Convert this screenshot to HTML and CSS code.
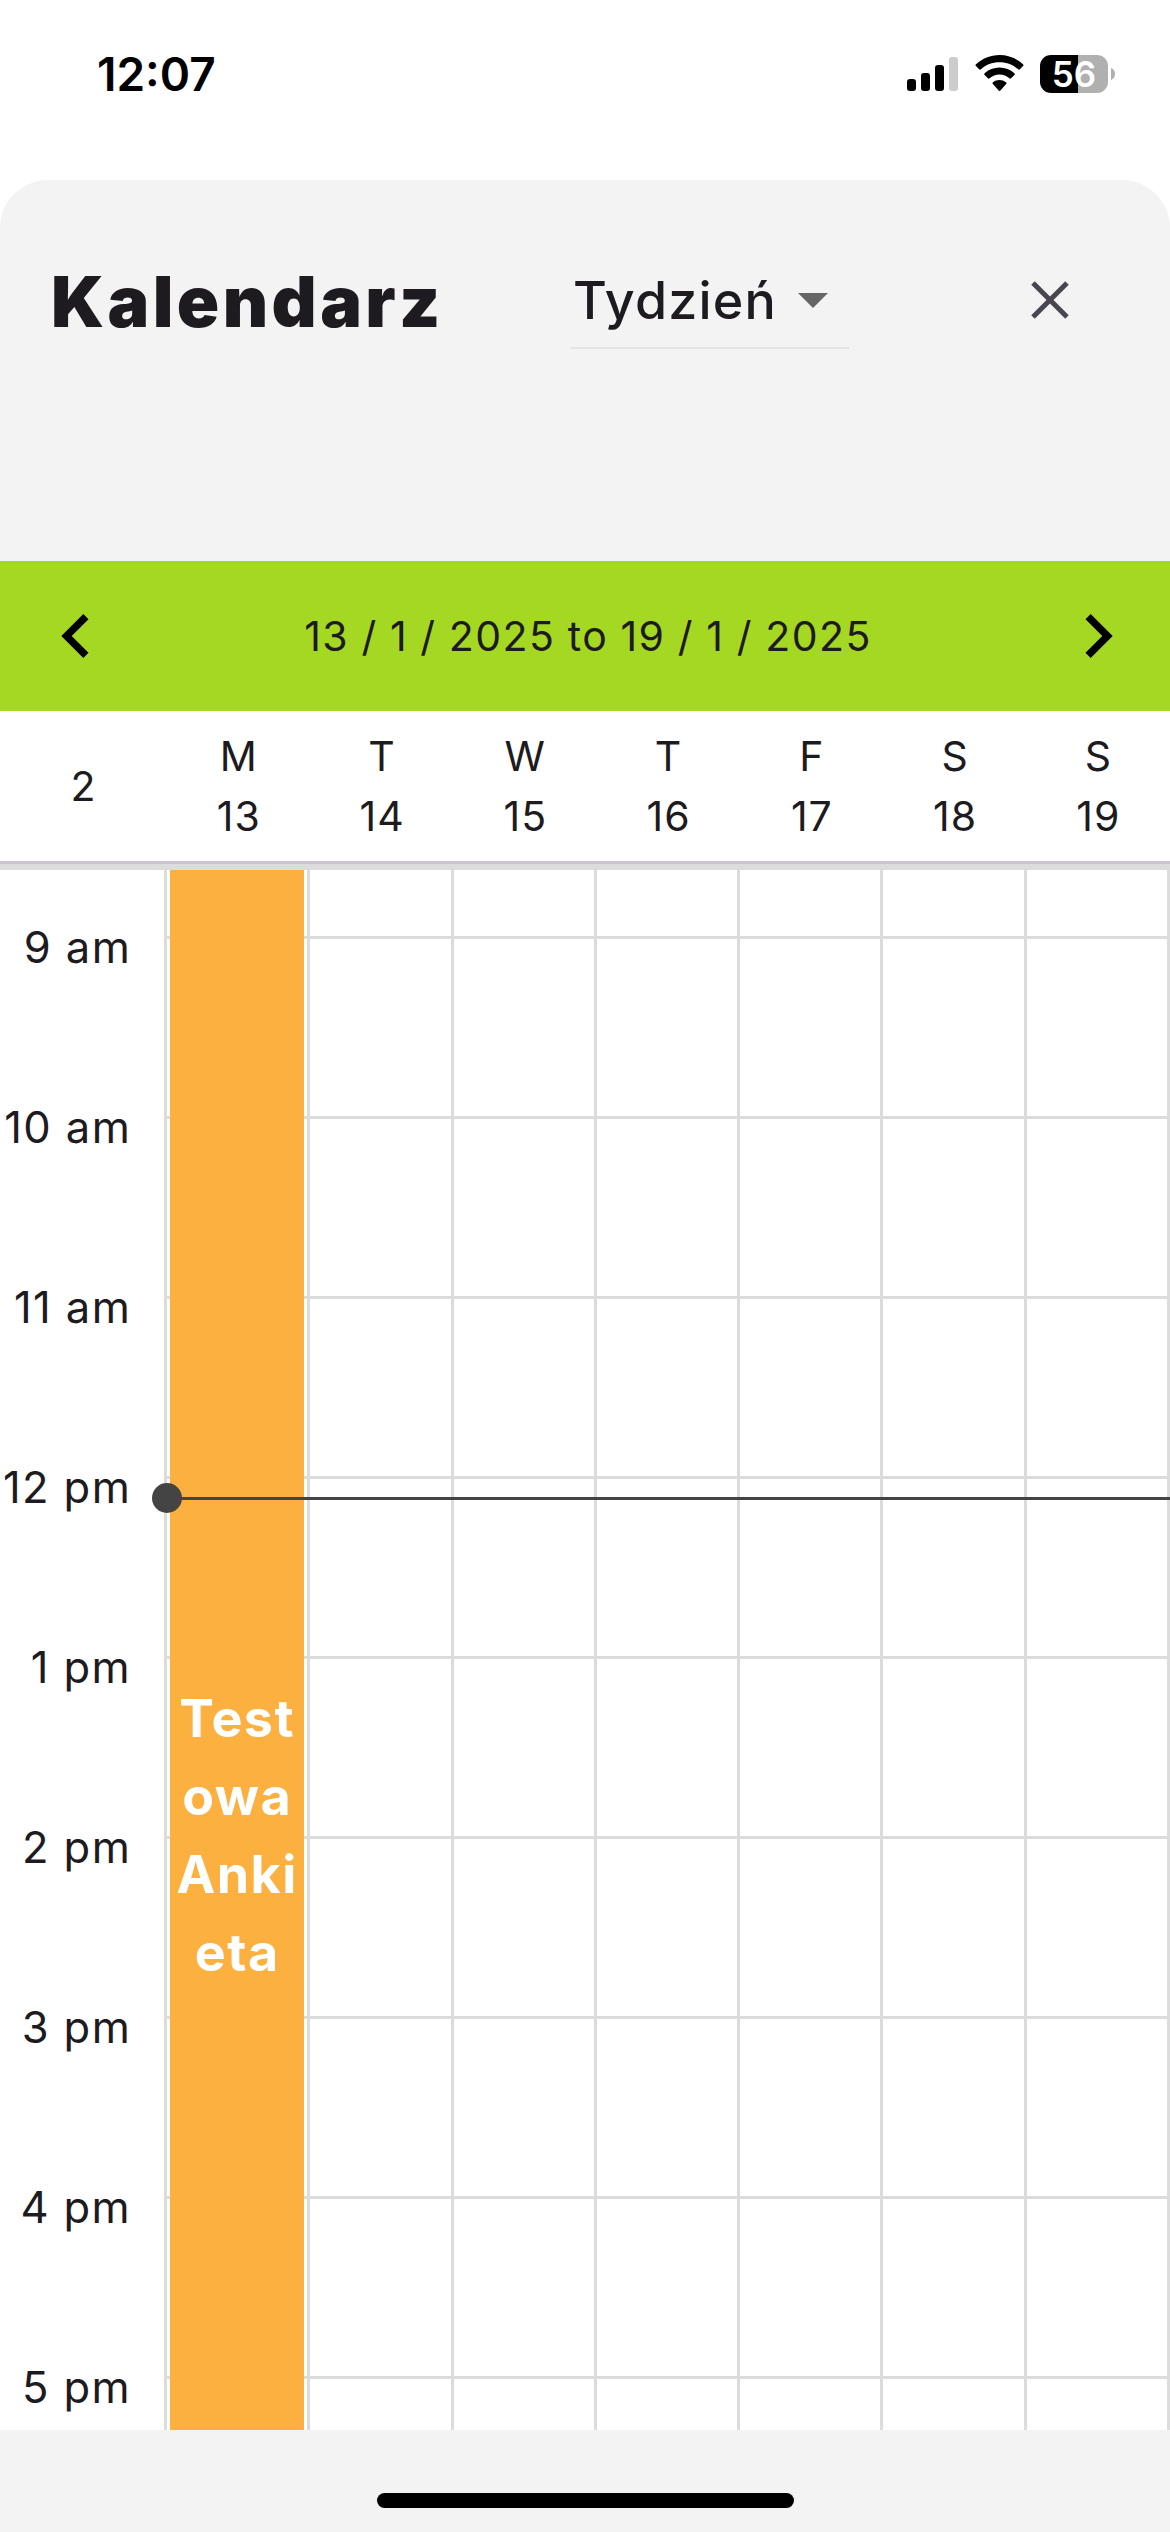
FILE: index.html
```html
<!DOCTYPE html>
<html lang="pl">
<head>
<meta charset="utf-8">
<title>Kalendarz</title>
<link rel="stylesheet" href="styles.css">
</head>
<body>
<header class="status">
  <div class="clock"><span>12:07</span></div>
  <div class="status-icons">
    <svg class="signal" width="51" height="34" viewBox="0 0 51 34">
      <rect x="0" y="22" width="9" height="12" rx="3"/>
      <rect x="14" y="16" width="9" height="18" rx="3"/>
      <rect x="28" y="8" width="9" height="26" rx="3"/>
      <rect x="42" y="0" width="9" height="34" rx="3" fill="#ccc"/>
    </svg>
    <svg class="wifi" width="49" height="36" viewBox="0 0 49 36">
      <path d="M24.500 0C15.500 0 7.200 3.500 1 9.300a1.200 1.200 0 0 0 0 1.800l3.100 3.200a1.300 1.300 0 0 0 1.800 0C10.800 9.800 17.300 7.200 24.500 7.200s13.700 2.600 18.600 7.100a1.300 1.300 0 0 0 1.800 0l3.100-3.200a1.200 1.200 0 0 0 0-1.800C41.800 3.500 33.500 0 24.500 0z"/>
      <path d="M24.500 12.500c-5.700 0-10.900 2.200-14.900 5.700a1.200 1.200 0 0 0 0 1.800l3.300 3.300a1.300 1.300 0 0 0 1.700 0c2.700-2.300 6.100-3.700 9.900-3.700s7.200 1.400 9.900 3.700a1.300 1.300 0 0 0 1.700 0l3.300-3.300a1.200 1.200 0 0 0 0-1.800c-4-3.500-9.200-5.700-14.900-5.700z"/>
      <path d="M24.500 25c-2.500 0-4.700.8-6.500 2.200a1.200 1.200 0 0 0-.1 1.800l5.700 6.500a1.200 1.200 0 0 0 1.800 0L31.100 29a1.200 1.200 0 0 0-.1-1.800A10.500 10.500 0 0 0 24.500 25z"/>
    </svg>
    <div class="battery"><span class="level">56</span><svg width="4" height="12" viewBox="0 0 4 12"><path d="M0 0C2.500 1 4 3.200 4 6S2.500 11 0 12z" fill="#b0b0b0"/></svg></div>
  </div>
</header>
<main class="sheet">
  <div class="toolbar">
    <h1 class="title">Kalendarz</h1>
    <div class="select"><span class="select-label">Tydzień</span><svg width="30" height="15" viewBox="0 0 30 15"><path d="M0 0h30L15 15z" fill="#666"/></svg></div>
    <svg class="close" width="38" height="38" viewBox="0 0 38 38"><path d="M2 2l34 34M36 2L2 36" stroke="#49454f" stroke-width="5"/></svg>
  </div>
  <nav class="range">
    <svg width="88" height="88" viewBox="0 0 24 24"><path d="M15.410 16.580L10.830 12l4.580-4.590L14 6l-6 6 6 6z"/></svg>
    <span class="range-label">13 / 1 / 2025 to 19 / 1 / 2025</span>
    <svg width="88" height="88" viewBox="0 0 24 24"><path d="M8.590 16.580L13.170 12 8.590 7.410 10 6l6 6-6 6z"/></svg>
  </nav>
  <div class="days">
    <div class="day">2</div>
    <div class="day">M<br>13</div>
    <div class="day">T<br>14</div>
    <div class="day">W<br>15</div>
    <div class="day">T<br>16</div>
    <div class="day">F<br>17</div>
    <div class="day">S<br>18</div>
    <div class="day">S<br>19</div>
  </div>
  <div class="grid">
    <div class="hours">
      <span>9 am</span><span>10 am</span><span>11 am</span><span>12 pm</span><span>1 pm</span><span>2 pm</span><span>3 pm</span><span>4 pm</span><span>5 pm</span>
    </div>
    <div class="col"><div class="event">Test<br>owa<br>Anki<br>eta</div></div>
    <div class="col"></div>
    <div class="col"></div>
    <div class="col"></div>
    <div class="col"></div>
    <div class="col"></div>
    <div class="col"></div>
    <div class="now"></div>
  </div>
</main>
<footer class="home"><div class="home-bar"></div></footer>
</body>
</html>
```
FILE: styles.css
```css
* { box-sizing: border-box; }
body {
  margin: 0;
  width: 1170px;
  height: 2532px;
  overflow: hidden;
  display: flex;
  flex-direction: column;
  background: #fff;
  color: #1d1b20;
  font-family: Inter, "Liberation Sans", sans-serif;
}
svg { display: block; flex: none; }
.status {
  height: 180px;
  padding: 55px 55px 0 97px;
  display: flex;
  justify-content: space-between;
  align-items: flex-start;
  color: #000;
}
.clock { height: 39px; line-height: 39px; font-size: 46px; font-weight: 600; }
.status-icons { display: flex; }
.signal { margin: 2px 17px 0 0; }
.wifi { margin-right: 16px; }
.battery { display: flex; align-items: center; gap: 3px; }
.level {
  width: 68px;
  height: 38px;
  border-radius: 11px;
  background: linear-gradient(90deg, #000 38px, #b0b0b0 38px);
  color: #fff;
  font-size: 35px;
  font-weight: 600;
  line-height: 38px;
  text-align: center;
}
.sheet {
  flex: 1;
  min-height: 0;
  display: flex;
  flex-direction: column;
  background: #f3f3f3;
  border-radius: 48px 48px 0 0;
}
.toolbar {
  height: 381px;
  padding: 71px 101px 0 51px;
  display: flex;
  align-items: flex-start;
}
.title {
  margin: 0;
  width: 520px;
  font-size: 70px;
  font-weight: 900;
  line-height: 101px;
  letter-spacing: 3.400px;
}
.select {
  width: 278px;
  height: 98px;
  padding: 3px 0 0 2px;
  display: flex;
  align-items: center;
  gap: 21px;
  border-bottom: 2px solid #e4e4e4;
}
.select-label { font-size: 52px; font-weight: 500; line-height: 93px; letter-spacing: 1.150px; }
.close { margin: 30px 0 0 auto; }
.range {
  height: 150px;
  padding: 0 28px 0 32px;
  display: flex;
  align-items: center;
  justify-content: space-between;
  background: #a5d823;
}
.range-label { padding-left: 2px; font-size: 41px; letter-spacing: 1.450px; word-spacing: -.7px; }
.days {
  height: 159px;
  display: grid;
  grid-template-columns: 167.143px repeat(7, 1fr);
  align-items: center;
  background: #fff;
  border-bottom: 6px solid #dcdcdc;
  box-shadow: inset 0 -3px #cac4d0;
  padding-bottom: 3px;
  text-align: center;
  font-size: 41px;
  line-height: 60px;
  letter-spacing: 1px;
}
.grid {
  position: relative;
  flex: 1;
  display: grid;
  grid-template-columns: 167.143px repeat(7, 1fr);
  background: #fff;
}
.hours {
  padding: 47px 33px 0 0;
  display: flex;
  flex-direction: column;
  align-items: flex-end;
  gap: 120px;
  font-size: 43.500px;
  line-height: 60px;
  letter-spacing: 1.400px;
  white-space: nowrap;
  border-right: 3px solid #dcdcdc;
}
.col {
  height: 1560px;
  border-right: 3px solid #dcdcdc;
  background: repeating-linear-gradient(#fff 0 66px, #dcdcdc 66px 69px, #fff 69px 180px);
}
.event {
  width: 134px;
  height: 1560px;
  margin-left: 3px;
  padding-top: 810px;
  background: #fbb040;
  color: #fff;
  text-align: center;
  font-size: 52px;
  font-weight: 700;
  line-height: 78px;
  letter-spacing: 1.500px;
}
.now {
  position: absolute;
  left: 167px;
  right: 0;
  top: 627px;
  height: 3px;
  background: #444;
}
.now::before {
  content: "";
  position: absolute;
  left: -15px;
  top: -14px;
  width: 30px;
  height: 30px;
  border-radius: 50%;
  background: #444;
}
.home {
  height: 102px;
  padding-top: 63px;
  background: #f3f3f3;
}
.home-bar {
  width: 417px;
  height: 15px;
  margin: 0 auto;
  border-radius: 8px;
  background: #000;
}
```
